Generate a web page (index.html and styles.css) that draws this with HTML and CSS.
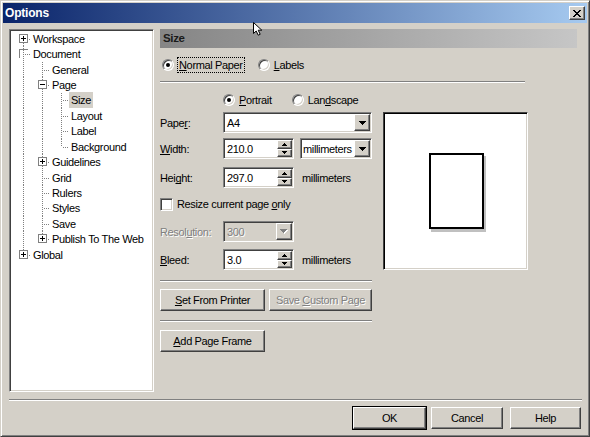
FILE: index.html
```html
<!DOCTYPE html>
<html lang="en">
<head>
    <meta charset="UTF-8">
    <title>Options</title>
    <link rel="stylesheet" href="styles.css">
</head>
<body>
<div class="window">
    <div class="titlebar">
        <span class="title">Options</span>
        <span class="close">
            <svg width="8" height="7" viewBox="0 0 8 7" shape-rendering="crispEdges"><path d="M0 0h2v1h1v1h2v-1h1v-1h2v1h-1v1h-1v1h-1v1h1v1h1v1h1v1h-2v-1h-1v-1h-2v1h-1v1h-2v-1h1v-1h1v-1h1v-1h-1v-1h-1v-1h-1z"/></svg>
        </span>
    </div>

    <div class="body">
        <div class="main">
            <!-- category tree -->
            <div class="tree">
                <div class="node"><span class="cell first"><i class="box plus"></i></span><span class="name">Workspace</span></div>
                <div class="node"><span class="cell tee"><i class="box open"></i></span><span class="name">Document</span></div>
                <div class="node"><span class="cell pipe"></span><span class="cell tee"></span><span class="name">General</span></div>
                <div class="node"><span class="cell pipe"></span><span class="cell tee"><i class="box minus"></i></span><span class="name">Page</span></div>
                <div class="node"><span class="cell pipe"></span><span class="cell pipe"></span><span class="cell tee"></span><span class="name sel">Size</span></div>
                <div class="node"><span class="cell pipe"></span><span class="cell pipe"></span><span class="cell tee"></span><span class="name">Layout</span></div>
                <div class="node"><span class="cell pipe"></span><span class="cell pipe"></span><span class="cell tee"></span><span class="name">Label</span></div>
                <div class="node"><span class="cell pipe"></span><span class="cell pipe"></span><span class="cell end"></span><span class="name">Background</span></div>
                <div class="node"><span class="cell pipe"></span><span class="cell tee"><i class="box plus"></i></span><span class="name">Guidelines</span></div>
                <div class="node"><span class="cell pipe"></span><span class="cell tee"></span><span class="name">Grid</span></div>
                <div class="node"><span class="cell pipe"></span><span class="cell tee"></span><span class="name">Rulers</span></div>
                <div class="node"><span class="cell pipe"></span><span class="cell tee"></span><span class="name">Styles</span></div>
                <div class="node"><span class="cell pipe"></span><span class="cell tee"></span><span class="name">Save</span></div>
                <div class="node"><span class="cell pipe"></span><span class="cell end"><i class="box plus"></i></span><span class="name">Publish To The Web</span></div>
                <div class="node"><span class="cell end"><i class="box plus"></i></span><span class="name">Global</span></div>
            </div>

            <!-- size page -->
            <div class="page">
                <div class="heading">Size</div>

                <div class="radios kind">
                    <span class="radio"><i class="dot on"></i><span class="focus"><u>N</u>ormal Paper</span></span>
                    <span class="radio labels"><i class="dot"></i><u>L</u>abels</span>
                </div>
                <div class="etch wide"></div>

                <div class="columns">
                    <div class="form">
                        <div class="radios orient">
                            <span class="radio"><i class="dot on"></i><u>P</u>ortrait</span>
                            <span class="radio landscape"><i class="dot"></i>Lan<u>d</u>scape</span>
                        </div>

                        <div class="row paper">
                            <span class="lbl">Pape<u>r</u>:</span>
                            <div class="field long">
                                <span class="val">A4</span>
                                <span class="drop"><svg width="7" height="4" shape-rendering="crispEdges"><path d="M0 0H7V1H6V2H5V3H4V4H3V3H2V2H1V1H0Z"/></svg></span>
                            </div>
                        </div>

                        <div class="row size-w">
                            <span class="lbl"><u>W</u>idth:</span>
                            <div class="field num">
                                <span class="val">210.0</span>
                                <span class="spin">
                                    <i><svg width="5" height="3" shape-rendering="crispEdges"><path d="M0 3H5V2H4V1H3V0H2V1H1V2H0Z"/></svg></i>
                                    <i><svg width="5" height="3" shape-rendering="crispEdges"><path d="M0 0H5V1H4V2H3V3H2V2H1V1H0Z"/></svg></i>
                                </span>
                            </div>
                            <div class="field unit">
                                <span class="val">millimeters</span>
                                <span class="drop"><svg width="7" height="4" shape-rendering="crispEdges"><path d="M0 0H7V1H6V2H5V3H4V4H3V3H2V2H1V1H0Z"/></svg></span>
                            </div>
                        </div>

                        <div class="row size-h">
                            <span class="lbl">Hei<u>g</u>ht:</span>
                            <div class="field num">
                                <span class="val">297.0</span>
                                <span class="spin">
                                    <i><svg width="5" height="3" shape-rendering="crispEdges"><path d="M0 3H5V2H4V1H3V0H2V1H1V2H0Z"/></svg></i>
                                    <i><svg width="5" height="3" shape-rendering="crispEdges"><path d="M0 0H5V1H4V2H3V3H2V2H1V1H0Z"/></svg></i>
                                </span>
                            </div>
                            <span class="unit-text">millimeters</span>
                        </div>

                        <div class="check-row">
                            <i class="check"></i>
                            <span>Resize current page <u>o</u>nly</span>
                        </div>

                        <div class="row resolution">
                            <span class="lbl disabled">Resol<u>u</u>tion:</span>
                            <div class="field num off">
                                <span class="val disabled">300</span>
                                <span class="drop"><svg width="8" height="5" shape-rendering="crispEdges"><path fill="#fff" transform="translate(1 1)" d="M0 0H7V1H6V2H5V3H4V4H3V3H2V2H1V1H0Z"/><path fill="#808080" d="M0 0H7V1H6V2H5V3H4V4H3V3H2V2H1V1H0Z"/></svg></span>
                            </div>
                        </div>

                        <div class="row bleed">
                            <span class="lbl"><u>B</u>leed:</span>
                            <div class="field num">
                                <span class="val">3.0</span>
                                <span class="spin">
                                    <i><svg width="5" height="3" shape-rendering="crispEdges"><path d="M0 3H5V2H4V1H3V0H2V1H1V2H0Z"/></svg></i>
                                    <i><svg width="5" height="3" shape-rendering="crispEdges"><path d="M0 0H5V1H4V2H3V3H2V2H1V1H0Z"/></svg></i>
                                </span>
                            </div>
                            <span class="unit-text">millimeters</span>
                        </div>

                        <div class="etch narrow sep1"></div>
                        <div class="btn-row">
                            <span class="btn printer"><span><u>S</u>et From Printer</span></span>
                            <span class="btn custom disabled"><span>Save <u>C</u>ustom Page</span></span>
                        </div>
                        <div class="etch narrow sep2"></div>
                        <span class="btn frame"><span><u>A</u>dd Page Frame</span></span>
                    </div>

                    <div class="preview">
                        <div class="sheet"></div>
                    </div>
                </div>
            </div>
        </div>

        <div class="etch bottom"></div>

        <div class="actions">
            <span class="btn default">OK</span>
            <span class="btn cancel">Cancel</span>
            <span class="btn help">Help</span>
        </div>
    </div>

    <!-- mouse pointer -->
    <svg class="cursor" width="11" height="14" viewBox="0 0 11 14"><path d="M0.5 0.5V11.5L3.2 9L5.2 13.2L7.2 12.3L5.2 8.2H8.8Z" fill="#fff" stroke="#000" stroke-width="1"/></svg>
</div>
</body>
</html>
```

FILE: styles.css
```css
* {
    box-sizing: border-box;
}

body {
    margin: 0;
    font-family: "Liberation Sans", Arial, sans-serif;
    font-size: 11px;
    letter-spacing: -0.35px;
    color: #000;
    background: #d4d0c8;
}

u {
    text-underline-offset: 1px;
    text-decoration-skip-ink: none;
}

/* window frame */
.window {
    position: relative;
    width: 590px;
    height: 437px;
    padding: 2px;
    background: #d4d0c8;
    border: 1px solid;
    border-color: #d4d0c8 #404040 #404040 #d4d0c8;
    box-shadow: inset 1px 1px #fff, inset -1px -1px #808080;
}

.titlebar {
    display: flex;
    align-items: center;
    justify-content: space-between;
    height: 20px;
    padding: 0 2px 0 2px;
    background: linear-gradient(to right, #0a246a, #a6caf0);
}

.title {
    color: #fff;
    font-weight: bold;
    font-size: 12px;
    letter-spacing: -0.2px;
}

.close {
    display: flex;
    align-items: center;
    justify-content: center;
    width: 16px;
    height: 14px;
    background: #d4d0c8;
    border: 1px solid;
    border-color: #fff #404040 #404040 #fff;
    box-shadow: inset -1px -1px #808080;
}

.body {
    padding: 6px 5px 0 6px;
}

.main {
    display: flex;
    gap: 6px;
    height: 363px;
}

/* shared 3d borders */
.tree,
.field,
.check,
.preview {
    border: 1px solid;
    border-color: #808080 #fff #fff #808080;
    box-shadow: inset 1px 1px #404040, inset -1px -1px #d4d0c8;
}

.btn,
.drop,
.spin i {
    background: #d4d0c8;
    border: 1px solid;
    border-color: #fff #404040 #404040 #fff;
    box-shadow: inset -1px -1px #808080;
}

/* tree */
.tree {
    width: 145px;
    height: 363px;
    background: #fff;
    padding: 1px;
}

.node {
    display: flex;
    align-items: center;
    height: 15.43px;
}

.cell {
    position: relative;
    flex: none;
    width: 19px;
    height: 100%;
}

.cell.pipe::before,
.cell.tee::before,
.cell.end::before,
.cell.first::before {
    content: "";
    position: absolute;
    left: 12px;
    top: 0;
    bottom: 0;
    width: 1px;
    background: repeating-linear-gradient(to bottom, #808080 0 1px, transparent 1px 2px);
}

.cell.end::before {
    bottom: 50%;
}

.cell.first::before {
    top: 50%;
}

.cell.tee::after,
.cell.end::after,
.cell.first::after {
    content: "";
    position: absolute;
    left: 13px;
    right: -1px;
    top: 50%;
    height: 1px;
    background: repeating-linear-gradient(to right, transparent 0 1px, #808080 1px 2px);
}

.box {
    position: absolute;
    z-index: 1;
    left: 8px;
    top: 50%;
    margin-top: -5px;
    width: 9px;
    height: 9px;
    background: #fff;
    border: 1px solid #808080;
}

.box.plus::before,
.box.minus::before {
    content: "";
    position: absolute;
    left: 1px;
    top: 3px;
    width: 5px;
    height: 1px;
    background: #000;
}

.box.plus::after {
    content: "";
    position: absolute;
    left: 3px;
    top: 1px;
    width: 1px;
    height: 5px;
    background: #000;
}

.box.open {
    border-right: 0;
    border-bottom: 0;
    background: transparent;
}

.name {
    margin-left: 1px;
    padding: 0 2px;
    line-height: 16px;
    white-space: nowrap;
}

.name.sel {
    background: #d4d0c8;
}

/* page */
.page {
    display: flex;
    flex-direction: column;
    width: 417px;
}

.heading {
    height: 19px;
    padding-left: 3px;
    line-height: 19px;
    font-weight: bold;
    font-size: 11.5px;
    color: #1a1a1a;
    background: linear-gradient(to right, #858585, #c6c6c6);
}

.etch {
    height: 2px;
    border-top: 1px solid #808080;
    border-bottom: 1px solid #fff;
}

.etch.wide {
    width: 365px;
    margin-top: 8px;
}

.radios {
    display: flex;
    height: 16px;
    align-items: center;
}

.radios.kind {
    margin-top: 9px;
    padding-left: 2px;
}

.radios.orient {
    margin-top: 9px;
    padding-left: 63px;
}

.radio {
    display: flex;
    align-items: center;
    white-space: nowrap;
}

.dot {
    position: relative;
    flex: none;
    width: 12px;
    height: 12px;
    margin-right: 4px;
    border-radius: 50%;
    background: #fff;
    border: 1px solid;
    border-color: #808080 #fff #fff #808080;
    box-shadow: inset 1px 1px #404040, inset -1px -1px #d4d0c8;
}

.dot.on::after {
    content: "";
    position: absolute;
    left: 3px;
    top: 3px;
    width: 4px;
    height: 4px;
    border-radius: 50%;
    background: #000;
}

.focus {
    padding: 1px 1px;
    outline: 1px dotted #000;
    outline-offset: 0;
}

.radio.labels {
    margin-left: 14px;
}

.radio.landscape {
    margin-left: 20px;
}

.columns {
    display: flex;
}

.form {
    display: flex;
    flex-direction: column;
    width: 212px;
}

.row {
    display: flex;
    align-items: center;
    height: 21px;
}

.row.paper {
    margin-top: 4px;
}

.row.size-w {
    margin-top: 5px;
}

.row.size-h {
    margin-top: 8px;
}

.row.resolution {
    margin-top: 10px;
}

.row.bleed {
    margin-top: 7px;
}

.lbl {
    flex: none;
    width: 63px;
}

.field {
    display: flex;
    height: 21px;
    background: #fff;
}

.field.long {
    width: 149px;
}

.field.num {
    width: 71px;
}

.field.unit {
    width: 72px;
    margin-left: 6px;
}

.field.off {
    background: #d4d0c8;
}

.val {
    flex: 1;
    display: flex;
    align-items: center;
    padding-left: 3px;
    white-space: nowrap;
    overflow: hidden;
}

.field.unit .val {
    padding-left: 2px;
}

.drop {
    display: flex;
    align-items: center;
    justify-content: center;
    flex: none;
    width: 16px;
    margin: 1px;
}

.spin {
    display: flex;
    flex-direction: column;
    flex: none;
    width: 15px;
    margin: 1px 1px 1px 0;
}

.spin i {
    flex: 1;
    display: flex;
    align-items: center;
    justify-content: center;
}

.unit-text {
    margin-left: 8px;
}

.disabled {
    color: #808080;
    text-shadow: 1px 1px #fff;
}

.check-row {
    display: flex;
    align-items: center;
    height: 14px;
    margin-top: 9px;
}

.check {
    width: 13px;
    height: 13px;
    margin-right: 4px;
    background: #fff;
}

.etch.narrow {
    width: 212px;
}

.etch.sep1 {
    margin-top: 10px;
}

.etch.sep2 {
    margin-top: 9px;
}

.btn-row {
    display: flex;
    gap: 4px;
    margin-top: 7px;
}

.btn {
    display: flex;
    align-items: center;
    justify-content: center;
    height: 22px;
    white-space: nowrap;
}

.btn.printer,
.btn.frame {
    width: 105px;
}

.btn.custom {
    width: 103px;
}

.btn.frame {
    margin-top: 8px;
}

.preview {
    display: flex;
    align-items: center;
    justify-content: center;
    width: 145px;
    height: 158px;
    margin: 29px 0 0 11px;
    background: #fff;
    border-color: #404040 #fff #fff #404040;
    box-shadow: inset 1px 1px #000, inset -1px -1px #d4d0c8;
}

.sheet {
    width: 55px;
    height: 76px;
    margin-left: 1px;
    border: 2px solid #000;
    background: #fff;
    box-shadow: 2px 3px 0 #c0c0c0;
}

/* bottom buttons */
.etch.bottom {
    width: 573px;
    margin-top: 7px;
}

.actions {
    display: flex;
    justify-content: flex-end;
    margin-top: 6px;
    padding-right: 1px;
}

.actions .btn {
    width: 73px;
}

.btn.cancel {
    width: 72px;
    margin-left: 5px;
}

.btn.help {
    width: 71px;
    margin-left: 7px;
}

.btn.default {
    outline: 1px solid #000;
    outline-offset: 0;
}

.cursor {
    position: absolute;
    left: 252px;
    top: 21px;
}
```
